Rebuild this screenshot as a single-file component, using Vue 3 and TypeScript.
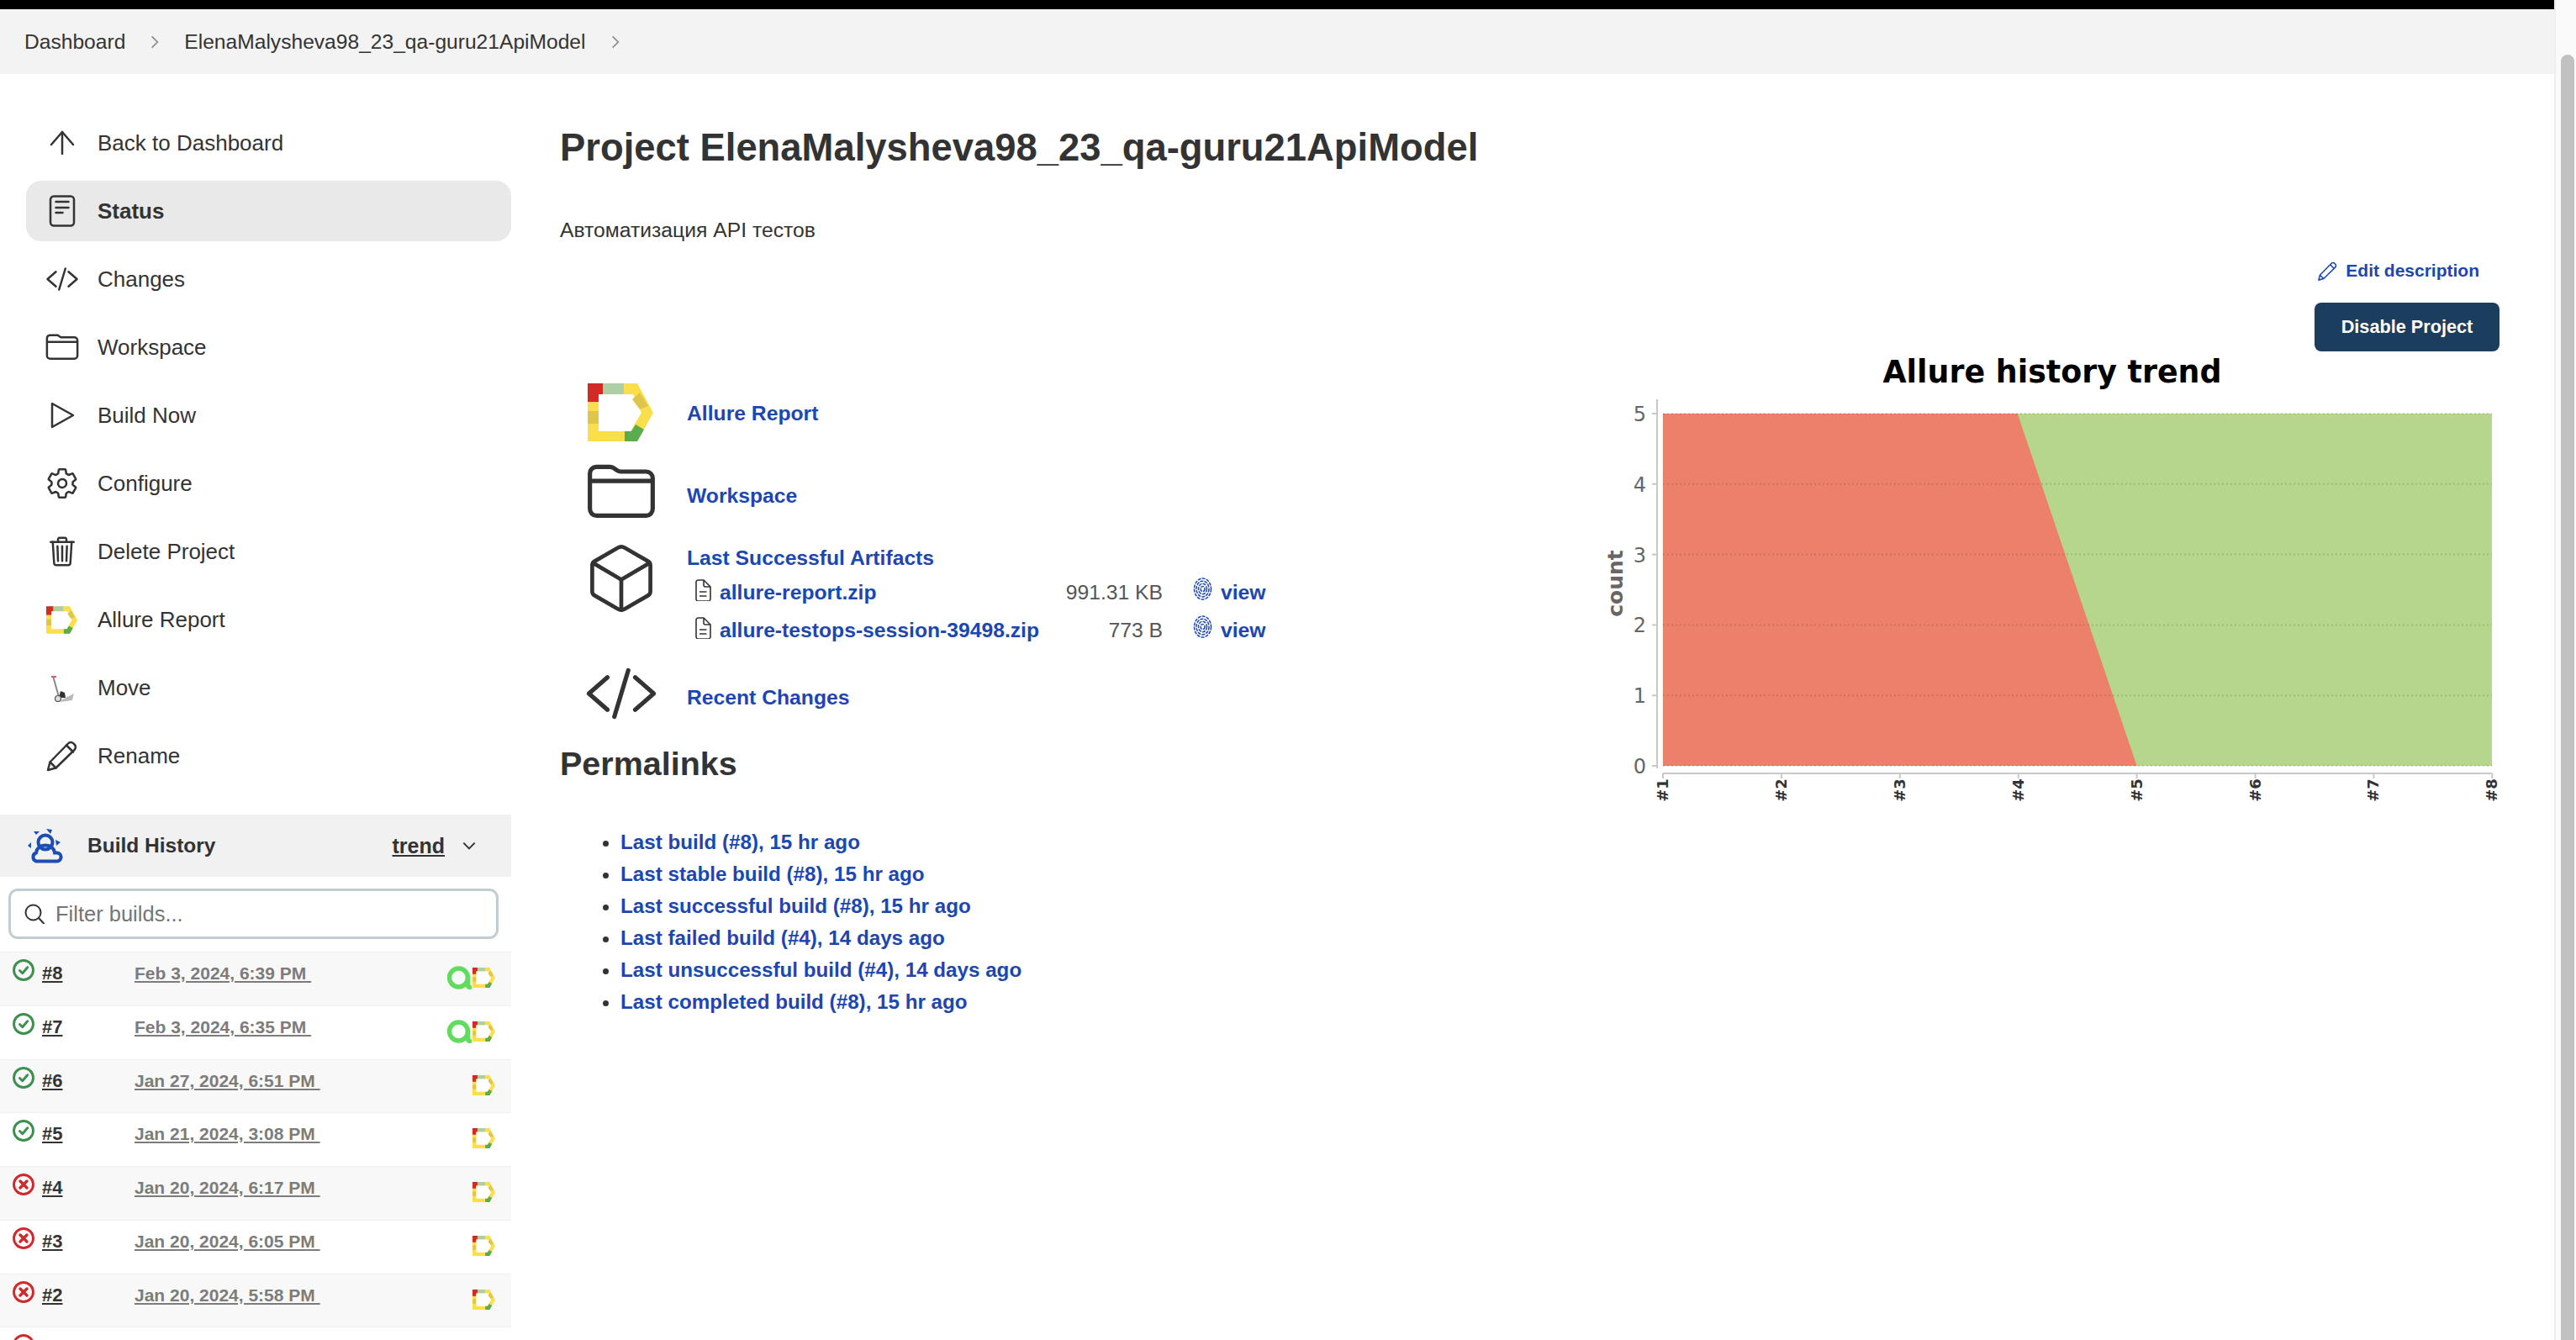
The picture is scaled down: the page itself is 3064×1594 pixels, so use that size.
<script setup lang="ts">
const ion: Record<string, string[]> = {
  code: ['M160 368L32 256l128-112', 'M352 368l128-112-128-112', 'M304 96l-96 320'],
  folder: [
    'M440 432H72a48 48 0 01-48-48V120a48 48 0 0148-48h99.31a47.6 47.6 0 0126.6 8.06l27.78 18.58A47.6 47.6 0 00252.29 106.7H440a48 48 0 0148 48v229.3a48 48 0 01-48 48z',
    'M32 176h448',
  ],
  cube: [
    'M448 341.37V170.61A32 32 0 00432.11 143l-152-88.46a47.94 47.94 0 00-48.24 0L79.89 143A32 32 0 0064 170.61v170.76A32 32 0 0079.89 369l152 88.46a48 48 0 0048.24 0l152-88.46A32 32 0 00448 341.37z',
    'M69 153.99l187 110 187-110',
    'M256 463.99v-200',
  ],
  gear: [
    'M262.29 192.31a64 64 0 1 0 57.4 57.4 64.13 64.13 0 0 0-57.4-57.4z',
    'M416.39 256a154.34 154.34 0 0 1-1.53 20.79l45.21 35.46a10.81 10.81 0 0 1 2.45 13.75l-42.77 74a10.81 10.81 0 0 1-13.14 4.59l-44.9-18.08a16.11 16.11 0 0 0-15.17 1.75A164.48 164.48 0 0 1 325 400.8a15.94 15.94 0 0 0-8.82 12.14l-6.73 47.89a11.08 11.08 0 0 1-10.68 9.17h-85.54a11.11 11.11 0 0 1-10.69-8.87l-6.72-47.82a16.07 16.07 0 0 0-9-12.22 155.3 155.3 0 0 1-21.46-12.57 16 16 0 0 0-15.11-1.71l-44.89 18.07a10.81 10.81 0 0 1-13.14-4.58l-42.77-74a10.8 10.8 0 0 1 2.45-13.75l38.21-30a16.05 16.05 0 0 0 6-14.08c-.36-4.17-.58-8.33-.58-12.5s.21-8.27.58-12.35a16 16 0 0 0-6.07-13.94l-38.19-30A10.81 10.81 0 0 1 49.48 186l42.77-74a10.81 10.81 0 0 1 13.14-4.59l44.9 18.08a16.11 16.11 0 0 0 15.17-1.75A164.48 164.48 0 0 1 187 111.2a15.94 15.94 0 0 0 8.82-12.14l6.73-47.89A11.08 11.08 0 0 1 213.23 42h85.54a11.11 11.11 0 0 1 10.69 8.87l6.72 47.82a16.07 16.07 0 0 0 9 12.22 155.3 155.3 0 0 1 21.46 12.57 16 16 0 0 0 15.11 1.71l44.89-18.07a10.81 10.81 0 0 1 13.14 4.58l42.77 74a10.8 10.8 0 0 1-2.45 13.75l-38.21 30a16.05 16.05 0 0 0-6.05 14.08c.33 4.14.55 8.3.55 12.47z',
  ],
  trash: [
    'M112 112l20 320c.95 18.49 14.4 32 32 32h184c17.67 0 30.87-13.51 32-32l20-320',
    'M80 112h352',
    'M192 112V72h0a23.93 23.93 0 0124-24h80a23.93 23.93 0 0124 24h0v40',
    'M256 176v224M184 176l8 224M328 176l-8 224',
  ],
}
const small: Record<string, string[]> = {
  up: ['M20 33V7', 'M7 22L20 7l13 15'],
  status: ['M10 2.5h20a4 4 0 0 1 4 4v27a4 4 0 0 1-4 4H10a4 4 0 0 1-4-4v-27a4 4 0 0 1 4-4z', 'M12.5 9h15', 'M12.5 16h15', 'M12.5 22h8'],
  play: ['M8 6v28l25-14z'],
  pencil: ['M3 37l2.5-9.5L27 5.5a4.5 4.5 0 0 1 6.5 0l1 1a4.5 4.5 0 0 1 0 6.5L12.5 34.5z', 'M5.5 27.5l7 7', 'M25 7.5l8 8'],
}
const logoParts = [
  { points: '0,0 59,0 78,35 59,69 0,69', fill: '#fade4b' },
  { points: '0,0 18,0 18,13 13,13 13,22 0,22', fill: '#d32a25' },
  { points: '18,0 43,0 43,13 18,13', fill: '#aecfa5' },
  { points: '0,33 13,33 13,48 0,48', fill: '#dfc54a' },
  { points: '13,13 54,13 64,35 51,57 13,57', fill: '#fff' },
  { points: '62,11 72,27 62,31 53,19', fill: '#dfc54a' },
  { points: '44,57 52,57 57,49 67,55 59,69 44,69', fill: '#5bab4f' },
]
const navItems = [
  { label: 'Back to Dashboard', icon: 'up' },
  { label: 'Status', icon: 'status', active: true },
  { label: 'Changes', icon: 'code' },
  { label: 'Workspace', icon: 'folder' },
  { label: 'Build Now', icon: 'play' },
  { label: 'Configure', icon: 'gear' },
  { label: 'Delete Project', icon: 'trash' },
  { label: 'Allure Report', icon: 'allure' },
  { label: 'Move', icon: 'move' },
  { label: 'Rename', icon: 'pencil' },
]
const builds = [
  { n: 8, d: 'Feb 3, 2024, 6:39 PM', ok: true, a: true },
  { n: 7, d: 'Feb 3, 2024, 6:35 PM', ok: true, a: true },
  { n: 6, d: 'Jan 27, 2024, 6:51 PM', ok: true, a: false },
  { n: 5, d: 'Jan 21, 2024, 3:08 PM', ok: true, a: false },
  { n: 4, d: 'Jan 20, 2024, 6:17 PM', ok: false, a: false },
  { n: 3, d: 'Jan 20, 2024, 6:05 PM', ok: false, a: false },
  { n: 2, d: 'Jan 20, 2024, 5:58 PM', ok: false, a: false },
]
const artifacts = [
  { name: 'allure-report.zip', size: '991.31 KB' },
  { name: 'allure-testops-session-39498.zip', size: '773 B' },
]
const permalinks = [
  'Last build (#8), 15 hr ago',
  'Last stable build (#8), 15 hr ago',
  'Last successful build (#8), 15 hr ago',
  'Last failed build (#4), 14 days ago',
  'Last unsuccessful build (#4), 14 days ago',
  'Last completed build (#8), 15 hr ago',
]
const yTicks = [5, 4, 3, 2, 1, 0].map((v, i) => ({ l: String(v), y: 72 + i * 83.8 }))
const xTicks = [0, 1, 2, 3, 4, 5, 6, 7].map((i) => ({ l: '#' + (i + 1), x: 98 + i * 140.9 }))
const fingerprintArcs = [2.5, 5, 7.5, 10]
const rays = ['7,3 14,3 10,7', '22,0 29,1 27,6', '33,13 39,16 34,20', '4,16 4,23 0,20']
</script>

<template>
  <div class="page">
    <div class="viewport">
      <div class="topbar"></div>
      <div class="crumbs">
        <span>Dashboard</span>
        <svg class="chev" viewBox="0 0 12 20"><path d="M2 2l8 8-8 8" /></svg>
        <span>ElenaMalysheva98_23_qa-guru21ApiModel</span>
        <svg class="chev" viewBox="0 0 12 20"><path d="M2 2l8 8-8 8" /></svg>
      </div>
      <div class="body">
        <aside class="side">
          <nav class="nav">
            <div v-for="it in navItems" :key="it.label" class="nav-item" :class="{ active: it.active }">
              <span class="nav-icon">
                <svg v-if="ion[it.icon]" viewBox="0 0 512 512" class="ic ion">
                  <path v-for="d in ion[it.icon]" :key="d" :d="d" />
                </svg>
                <svg v-else-if="small[it.icon]" viewBox="0 0 40 40" class="ic">
                  <path v-for="d in small[it.icon]" :key="d" :d="d" />
                </svg>
                <svg v-else-if="it.icon === 'allure'" viewBox="0 0 78 69" class="logo">
                  <polygon v-for="p in logoParts" :key="p.points" :points="p.points" :fill="p.fill" />
                </svg>
                <svg v-else viewBox="0 0 28 33" class="cart">
                  <path d="M3 2l7 25" stroke="#888" stroke-width="2" fill="none" />
                  <path d="M1 3h6" stroke="#c66" stroke-width="2" />
                  <path d="M12 20l5 2 1 6h-8z" fill="#333" />
                  <path d="M14 30l14-7-2 8-14 2z" fill="#bbb" />
                  <circle cx="9" cy="29" r="3.5" fill="#ddd" stroke="#555" stroke-width="1.2" />
                </svg>
              </span>
              <span>{{ it.label }}</span>
            </div>
          </nav>
          <div class="hist-head">
            <svg class="hist-icon" viewBox="0 0 42 41">
              <polygon v-for="r in rays" :key="r" :points="r" class="ray" />
              <circle cx="21" cy="16" r="8.5" class="cloud" />
              <path d="M10 38.5h24a5 5 0 0 0 1-10h-3c-1-6-5-9-11-9s-10 3-11 9a5.3 5.3 0 0 0 0 10z" class="cloud" />
            </svg>
            <span class="hist-title">Build History</span>
            <span class="hist-trend">trend</span>
            <svg class="hist-chev" viewBox="0 0 20 12"><path d="M2 2l8 8 8-8" /></svg>
          </div>
          <div class="filter-wrap">
            <div class="filter">
              <svg viewBox="0 0 24 24" class="search"><circle cx="10.5" cy="10.5" r="9" /><path d="M17 17l6 6.5" /></svg>
              <span>Filter builds...</span>
            </div>
          </div>
          <div class="builds">
            <div v-for="b in builds" :key="b.n" class="build">
              <svg class="st" viewBox="0 0 26 26" :class="b.ok ? 'ok' : 'bad'">
                <circle cx="13" cy="13" r="11.5" />
                <path v-if="b.ok" d="M8.5 13.5l3.2 3.2 6-7" />
                <path v-else class="x" d="M9 9l8 8M17 9l-8 8" />
              </svg>
              <span class="bn">#{{ b.n }}</span>
              <span class="bd">{{ b.d }}&nbsp;</span>
              <span class="badges">
                <svg v-if="b.a" class="aq" viewBox="0 0 29 28">
                  <circle cx="13.5" cy="14" r="11" />
                  <path d="M24.5 14v8q0 3 2.5 3.5" />
                </svg>
                <svg class="mini" viewBox="0 0 78 69">
                  <polygon v-for="p in logoParts" :key="p.points" :points="p.points" :fill="p.fill" />
                </svg>
              </span>
            </div>
            <div class="build">
              <svg class="st bad" viewBox="0 0 26 26"><circle cx="13" cy="13" r="11.5" /></svg>
            </div>
          </div>
        </aside>
        <main class="main">
          <h1>Project ElenaMalysheva98_23_qa-guru21ApiModel</h1>
          <p class="desc">Автоматизация API тестов</p>
          <div class="actions">
            <a class="edit">
              <svg viewBox="0 0 40 40" class="edit-ic">
                <path v-for="d in small.pencil" :key="d" :d="d" />
              </svg>
              Edit description
            </a>
            <button class="disable">Disable Project</button>
          </div>
          <div class="content">
            <section class="left">
              <div class="task t1">
                <svg viewBox="0 0 78 69" class="big-logo">
                  <polygon v-for="p in logoParts" :key="p.points" :points="p.points" :fill="p.fill" />
                </svg>
                <a class="link">Allure Report</a>
              </div>
              <div class="task t2">
                <svg viewBox="7.5 7.5 497 497" class="big-ic">
                  <path v-for="d in ion.folder" :key="d" :d="d" />
                </svg>
                <a class="link">Workspace</a>
              </div>
              <div class="task t3">
                <svg viewBox="34 34 444 444" class="big-ic cube">
                  <path v-for="d in ion.cube" :key="d" :d="d" />
                </svg>
                <div class="art">
                  <a class="link art-title">Last Successful Artifacts</a>
                  <div v-for="f in artifacts" :key="f.name" class="art-row">
                    <svg viewBox="0 0 20 26" class="doc">
                      <path d="M2 3.5A2.5 2.5 0 0 1 4.5 1H11l8 8v14.5a2.5 2.5 0 0 1-2.5 2.5h-12A2.5 2.5 0 0 1 2 23.5z" />
                      <path d="M11 1v6a2 2 0 0 0 2 2h6M6 15h8.5M6 20h8.5" />
                    </svg>
                    <a class="link">{{ f.name }}</a>
                    <span class="size">{{ f.size }}</span>
                    <svg viewBox="0 0 23 27" class="fp">
                      <ellipse v-for="r in fingerprintArcs" :key="r" cx="11.5" cy="13.5" :rx="r" :ry="r * 1.25" />
                    </svg>
                    <a class="link">view</a>
                  </div>
                </div>
              </div>
              <div class="task t4">
                <svg viewBox="23.5 23.5 465 465" class="big-ic codei">
                  <path v-for="d in ion.code" :key="d" :d="d" />
                </svg>
                <a class="link">Recent Changes</a>
              </div>
              <h2>Permalinks</h2>
              <ul class="perma">
                <li v-for="p in permalinks" :key="p"><a class="plink">{{ p }}</a></li>
              </ul>
            </section>
            <section class="right">
              <svg class="chart" width="1100" height="560" viewBox="0 0 1100 560">
                <text x="561" y="35" class="chart-title" text-anchor="middle">Allure history trend</text>
                <polygon points="98,72 1084,72 1084,491 98,491" fill="#b5d68b" />
                <polygon points="98,72 519.7,72 661.6,491 98,491" fill="#ec806a" />
                <line v-for="t in yTicks" :key="'g' + t.l" x1="98" x2="1084" :y1="t.y" :y2="t.y" class="grid" />
                <path d="M91 55V494" class="axis" />
                <path d="M98 500H1084" class="axis" />
                <g v-for="t in yTicks" :key="t.l">
                  <line x1="85" x2="91" :y1="t.y" :y2="t.y" class="axis" />
                  <text x="78" :y="t.y + 9" class="ylab" text-anchor="end">{{ t.l }}</text>
                </g>
                <g v-for="t in xTicks" :key="t.l">
                  <line :x1="t.x" :x2="t.x" y1="500" y2="506" class="axis" />
                  <text :transform="`translate(${t.x + 6} 520) rotate(-90)`" class="xlab" text-anchor="middle">{{ t.l }}</text>
                </g>
                <text transform="translate(50 274) rotate(-90)" class="count" text-anchor="middle">count</text>
              </svg>
            </section>
          </div>
        </main>
      </div>
    </div>
    <div class="scrollbar"><div class="thumb"></div></div>
  </div>
</template>

<style>
html, body { margin: 0; padding: 0; background: #fff; overflow: hidden; }
</style>

<style scoped>
.page { width: 3064px; height: 1594px; overflow: hidden; display: flex; font-family: "Liberation Sans", Arial, sans-serif; color: #333; background: #fff; }
.viewport { width: 3038px; flex: none; }
.topbar { height: 11px; background: #000; }
.crumbs { height: 77px; background: #f3f3f3; display: flex; align-items: center; padding-left: 29px; font-size: 24.6px; gap: 30px; }
.chev { width: 10px; height: 18px; fill: none; stroke: #8a8a8a; stroke-width: 2; }
.body { display: flex; }
.side { width: 608px; flex: none; }
.nav { padding: 46px 0 0 31px; display: flex; flex-direction: column; gap: 9px; }
.nav-item { width: 577px; height: 72px; border-radius: 18px; display: flex; align-items: center; font-size: 26px; }
.nav-item.active { background: #e9e9e9; font-weight: 700; }
.nav-icon { width: 85px; flex: none; display: flex; justify-content: center; }
.ic { width: 40px; height: 40px; fill: none; stroke: #333; stroke-width: 2.5; stroke-linecap: round; stroke-linejoin: round; }
.ic.ion { stroke-width: 32; }
.logo { width: 37px; height: 33px; }
.cart { width: 28px; height: 33px; }
.hist-head { margin-top: 34px; height: 74px; background: #f1f1f1; display: flex; align-items: center; }
.hist-icon { width: 42px; height: 41px; margin-left: 33px; flex: none; }
.ray { fill: #1c4db3; }
.cloud { fill: none; stroke: #1c4db3; stroke-width: 4; }
.hist-title { margin-left: 29px; font-weight: 700; font-size: 24.5px; }
.hist-trend { margin-left: auto; font-weight: 700; font-size: 25px; text-decoration: underline; }
.hist-chev { width: 18px; height: 10px; margin: 0 41px 0 20px; fill: none; stroke: #333; stroke-width: 2.4; }
.filter-wrap { padding: 14px 15px 0 10px; }
.filter { height: 60px; box-sizing: border-box; border: 3px solid #c3ccd1; border-radius: 11px; display: flex; align-items: center; gap: 13px; padding-left: 16px; font-size: 25.5px; color: #757575; }
.search { width: 24px; height: 24px; fill: none; stroke: #333; stroke-width: 2; stroke-linecap: round; }
.builds { margin-top: 15px; }
.build { height: 63.75px; box-sizing: border-box; border-top: 1px solid #f0f0f0; display: flex; align-items: flex-start; position: relative; background: #fff; }
.build:nth-child(odd) { background: #f8f8f8; }
.st { width: 26px; height: 26px; margin: 8px 9px 0 15px; flex: none; fill: none; stroke-width: 2.9; stroke-linecap: round; stroke-linejoin: round; }
.st.ok { stroke: #3b8f4f; }
.st.bad { stroke: #ce2a2e; }
.st .x { stroke-width: 3.4; }
.bn { margin-top: 12px; line-height: 26px; font-size: 22px; font-weight: 700; text-decoration: underline; width: 110px; flex: none; }
.bd { margin-top: 12px; line-height: 26px; font-size: 21px; font-weight: 700; text-decoration: underline; color: #7c7c7c; white-space: pre; }
.badges { position: absolute; right: 19px; top: 16px; display: flex; align-items: flex-start; gap: 1px; }
.aq { width: 29px; height: 28px; fill: none; stroke: #62dc5f; stroke-width: 5.5; stroke-linecap: round; }
.mini { width: 27px; height: 24px; margin-top: 2px; }
.main { flex: 1; min-width: 0; padding: 58px 65px 0 58px; display: flex; flex-direction: column; }
h1 { margin: 0; height: 60px; line-height: 60px; font-size: 45.4px; font-weight: 700; white-space: nowrap; }
.desc { margin: 53px 0 0; font-size: 24.7px; line-height: 29px; }
.actions { display: flex; flex-direction: column; align-items: flex-end; gap: 23px; margin-top: 19px; }
.edit { display: flex; align-items: center; gap: 9px; font-size: 21px; font-weight: 700; color: #1c47b0; margin-right: 24px; line-height: 30px; }
.edit-ic { width: 25px; height: 25px; fill: none; stroke: #1c47b0; stroke-width: 2.5; stroke-linejoin: round; }
.disable { width: 220px; height: 58px; background: #1b3e5e; color: #fff; font: 700 21.7px "Liberation Sans", Arial, sans-serif; border: 0; border-radius: 8px; }
.content { display: flex; margin-top: 38px; }
.left { width: 1214px; flex: none; }
.task { display: flex; align-items: center; padding-left: 33px; }
.big-logo { width: 78px; height: 69px; margin-right: 40px; flex: none; }
.big-ic { width: 80px; height: 80px; margin-right: 38px; flex: none; fill: none; stroke: #333; stroke-width: 32; stroke-linecap: round; stroke-linejoin: round; overflow: visible; }
.big-ic.cube { stroke-width: 26; }
.big-ic.codei { stroke-width: 30; }
.link { color: #1c47b0; font-weight: 700; font-size: 24.7px; white-space: nowrap; }
.t1 { height: 69px; }
.t1 > .link { padding-top: 3px; }
.t2 { height: 80px; margin-top: 20px; }
.t2 > .link { padding-top: 9px; }
.t3 { align-items: flex-start; margin-top: 23px; height: 125px; }
.t4 { height: 80px; margin-top: 12px; }
.t4 > .link { padding-top: 10px; }
.art { margin-top: -2px; }
.art-title { display: block; line-height: 36px; }
.art-row { display: grid; grid-template-columns: 39px 400px 127px 69px auto; align-items: center; height: 45px; }
.doc { width: 20px; height: 26px; margin: 0 0 5px 9px; fill: none; stroke: #333; stroke-width: 1.6; stroke-linejoin: round; }
.size { font-size: 24.7px; text-align: right; color: #555; white-space: nowrap; }
.fp { width: 23px; height: 27px; margin: 0 0 9px 36px; fill: none; stroke: #1c47b0; stroke-width: 1.5; stroke-dasharray: 4 1.2; }
h2 { margin: 21px 0 0; height: 44px; line-height: 44px; font-size: 39.5px; font-weight: 700; }
.perma { margin: 53px 0 0; padding: 0 0 0 72px; font-size: 24.2px; color: #333; }
.perma li { height: 38px; line-height: 38px; }
.plink { color: #1c47b0; font-weight: 700; white-space: nowrap; }
.right { flex: 1; min-width: 0; }
.chart { display: block; margin-top: -36px; }
.chart-title { font: 700 36.4px "DejaVu Sans", sans-serif; fill: #000; }
.grid { stroke: #000; stroke-opacity: .13; stroke-width: 2; stroke-dasharray: 2 3; }
.axis { stroke: #c8c8c8; stroke-width: 2; fill: none; }
.ylab { font: 24px "DejaVu Sans", sans-serif; fill: #666; }
.xlab { font: 700 18px "DejaVu Sans", sans-serif; fill: #333; }
.count { font: 700 25px "DejaVu Sans", sans-serif; fill: #666; }
.scrollbar { width: 26px; flex: none; height: 1594px; box-sizing: border-box; background: #fafafa; border-left: 2px solid #eee; }
.thumb { margin: 65px 0 0 6px; width: 16px; height: 1560px; background: #c1c1c1; border-radius: 8px; }
</style>
